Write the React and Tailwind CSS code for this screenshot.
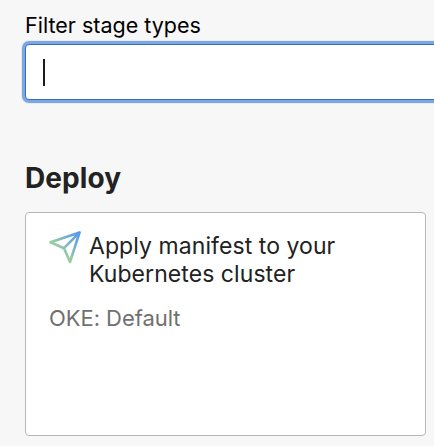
import React from "react";

function SendIcon() {
  return (
    <svg className="mt-[17px] h-[34px] w-[34px] shrink-0" viewBox="0 0 34 34" fill="none" aria-hidden="true">
      <defs>
        <linearGradient id="plane" x1="31" y1="3" x2="11" y2="23" gradientUnits="userSpaceOnUse">
          <stop offset="0" stopColor="#5a98ee" />
          <stop offset="0.3" stopColor="#6ba8da" />
          <stop offset="0.9" stopColor="#96cda2" />
        </linearGradient>
      </defs>
      <path d="M31.6 2.4 2.4 12.2 16 18.2 22 32ZM16 18.2 31.6 2.4" stroke="url(#plane)" strokeWidth="2.6" strokeLinejoin="round" />
    </svg>
  );
}

export default function App() {
  return (
    <main className="h-[446px] w-[434px] overflow-hidden bg-[#f7f7f7] pl-[25px] font-['Inter',sans-serif]">
      <label className="block h-[44px] pt-[11px] text-[21.5px] leading-[28px] whitespace-nowrap text-black">Filter stage types</label>
      <div className="flex h-[56px] w-[460px] items-center rounded-[4px] border border-[#2f6fc6] bg-white pl-[17px] shadow-[0_0_0_3px_#7fa6de,0_0_0_4px_#e6ecf5]">
        <span className="mt-[1px] h-[27px] w-[2px] bg-[#1b1b1b]" />
      </div>
      <h2 className="mt-[60px] h-[52px] text-[28px] leading-[36px] font-bold tracking-[0.1px] text-[#222]">Deploy</h2>
      <section className="h-[224px] w-[401px] rounded-[4px] border border-[#b3b6bc] bg-white pl-[22px]">
        <div className="flex">
          <SendIcon />
          <h3 className="mt-[19px] ml-[7px] text-[23px] leading-[28px] font-normal tracking-[0.07px] whitespace-nowrap text-[#222]">
            Apply manifest to your
            <br />
            Kubernetes cluster
          </h3>
        </div>
        <p className="mt-[16px] ml-[1px] text-[22px] leading-[28px] tracking-[-0.05px] text-[#707070]">OKE: Default</p>
      </section>
    </main>
  );
}
